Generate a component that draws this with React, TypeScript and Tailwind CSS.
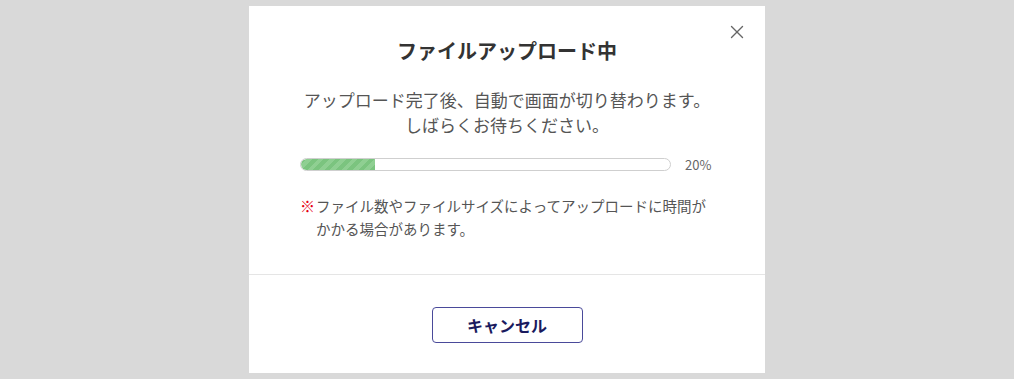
import { X } from 'lucide-react';

export default function App() {
  const progress = 20;

  return (
    <div
      className="h-[379px] w-full bg-[#d9d9d9] flex justify-center pt-[6px]"
      style={{ fontFamily: '"Noto Sans CJK JP", "Noto Sans", sans-serif' }}
    >
      <div className="relative w-[516px] h-[367px] bg-white flex flex-col">
        <button className="absolute right-[17px] top-[15px] text-[#666]">
          <X size={22} strokeWidth={1.5} />
        </button>

        <div className="px-[51px] pt-[31px] pb-[34px]">
          <h1 className="text-center text-[20px] leading-[28px] font-bold text-[#333]">
            ファイルアップロード中
          </h1>
          <p className="mt-[22px] text-center text-[17px] leading-[25px] text-[#555]">
            アップロード完了後、自動で画面が切り替わります。
            <br />
            しばらくお待ちください。
          </p>

          <div className="mt-[21px] h-[13px] flex items-center">
            <div className="w-[371px] h-[13px] rounded-full border border-[#cfcfcf] overflow-hidden bg-white">
              <div
                className="h-full rounded-l-full bg-[repeating-linear-gradient(-45deg,#7bc47f_0px,#7bc47f_4px,#8fcf92_4px,#8fcf92_8px)]"
                style={{ width: `${progress}%` }}
              />
            </div>
            <span className="ml-[14px] text-[13px] text-[#666]">{progress}%</span>
          </div>

          <div className="mt-[23px] flex text-[14.5px] leading-[23px] text-[#555]">
            <span className="text-[#e60012] font-bold text-[15px] w-[16px] shrink-0">※</span>
            <span className="w-[396px] shrink-0">
              ファイル数やファイルサイズによってアップロードに時間がかかる場合があります。
            </span>
          </div>
        </div>

        <div className="border-t border-[#e5e5e5] flex justify-center pt-[32px]">
          <button className="w-[151px] h-[36px] rounded-[4px] border border-[#4a4a9a] text-[#1a1a5e] text-[16px] font-bold">
            キャンセル
          </button>
        </div>
      </div>
    </div>
  );
}
